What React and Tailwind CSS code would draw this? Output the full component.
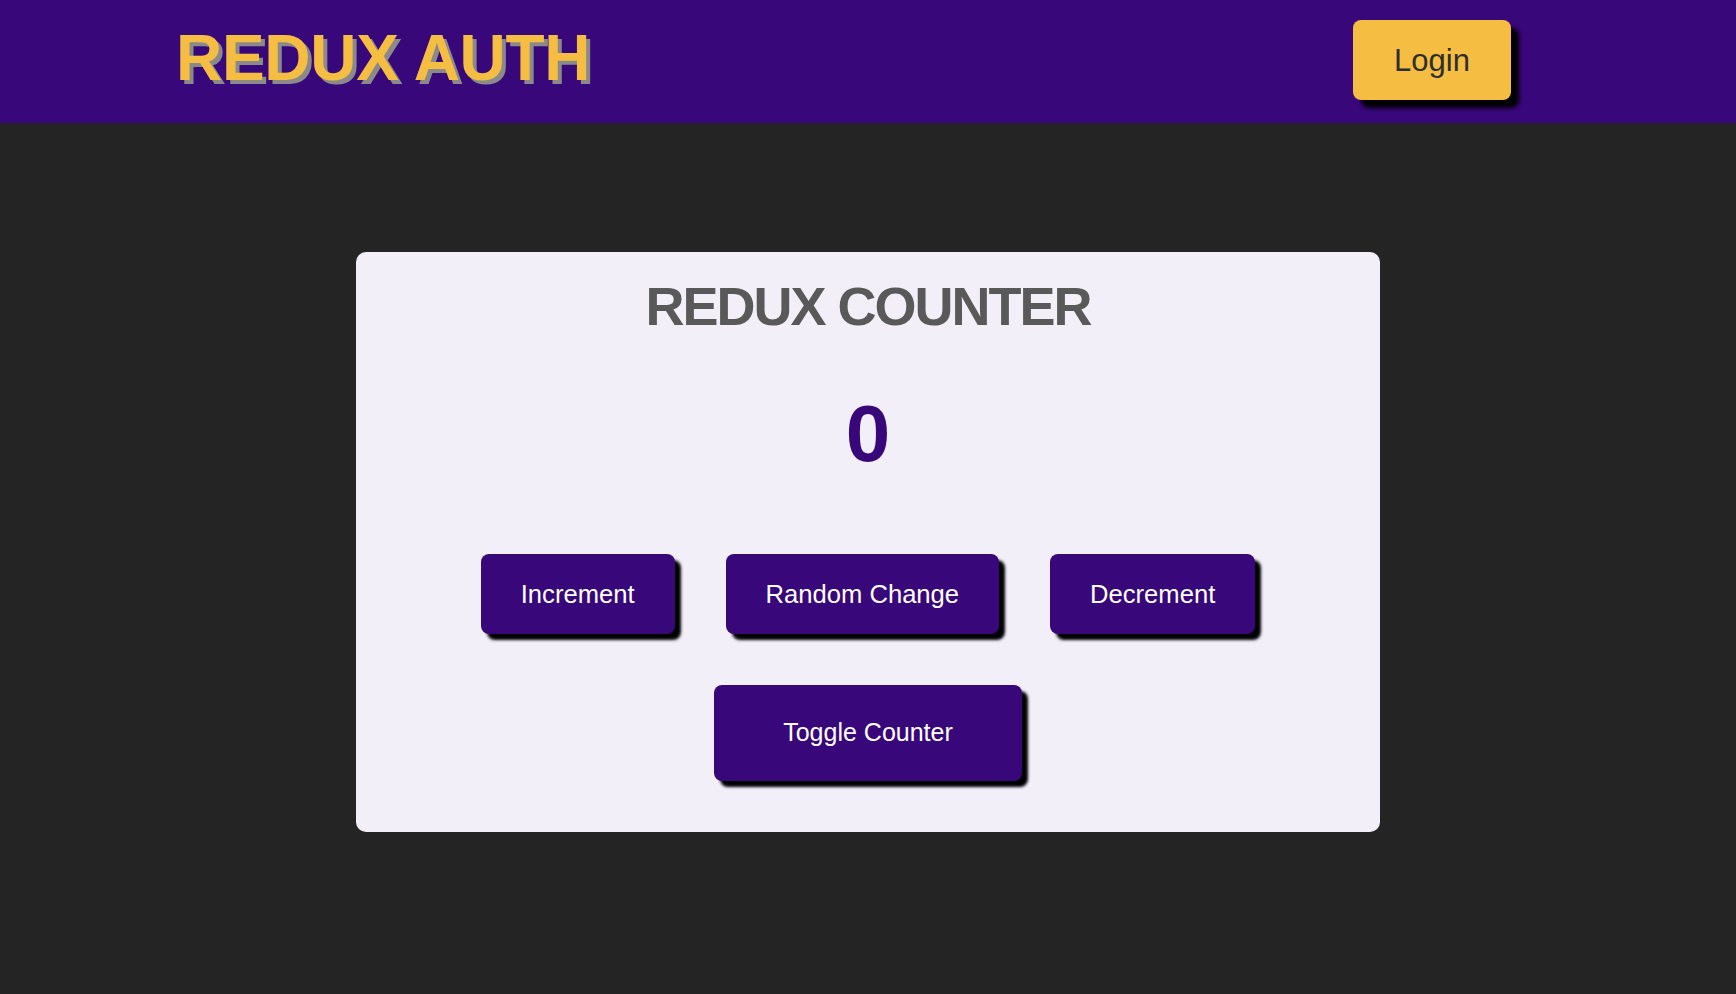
export default function App() {
  const font = { fontFamily: '"Liberation Sans", Arial, Helvetica, sans-serif' };
  return (
    <div className="min-h-screen bg-[#242424]" style={font}>
      <header className="h-[123px] bg-[#38077a] flex items-start justify-between pl-[176px] pr-[225px]">
        <h1 className="mt-[26px] text-[64px] leading-none font-bold tracking-[-0.3px] text-[#f5bd42] [text-shadow:4px_4px_0_#8a8a8a]">
          REDUX AUTH
        </h1>
        <button className="mt-[20px] w-[158px] h-[80px] pt-[3px] rounded-[8px] bg-[#f5bd42] text-[31px] text-[#2e2e2e] shadow-[8px_8px_4px_#000] flex items-center justify-center">
          Login
        </button>
      </header>
      <main className="flex justify-center pt-[129px]">
        <section className="w-[1024px] rounded-[10px] bg-[#f2eff9] pt-[27px] pb-[51px] flex flex-col items-center">
          <h2 className="text-[54px] leading-none font-bold tracking-[-2px] text-[#595959]">
            REDUX COUNTER
          </h2>
          <div className="mt-[61px] text-[80px] leading-none font-bold text-[#38077a]">0</div>
          <div className="mt-[80px] flex items-center justify-center gap-[51px]">
            <button className="h-[80px] px-[40px] rounded-[8px] bg-[#38077a] text-white text-[25.6px] shadow-[6px_6px_3px_#000]">
              Increment
            </button>
            <button className="h-[80px] px-[40px] rounded-[8px] bg-[#38077a] text-white text-[25.6px] shadow-[6px_6px_3px_#000]">
              Random Change
            </button>
            <button className="h-[80px] px-[40px] rounded-[8px] bg-[#38077a] text-white text-[25.6px] shadow-[6px_6px_3px_#000]">
              Decrement
            </button>
          </div>
          <button className="mt-[51px] w-[308px] h-[96px] rounded-[8px] bg-[#38077a] text-white text-[25px] shadow-[6px_6px_3px_#000]">
            Toggle Counter
          </button>
        </section>
      </main>
    </div>
  );
}
